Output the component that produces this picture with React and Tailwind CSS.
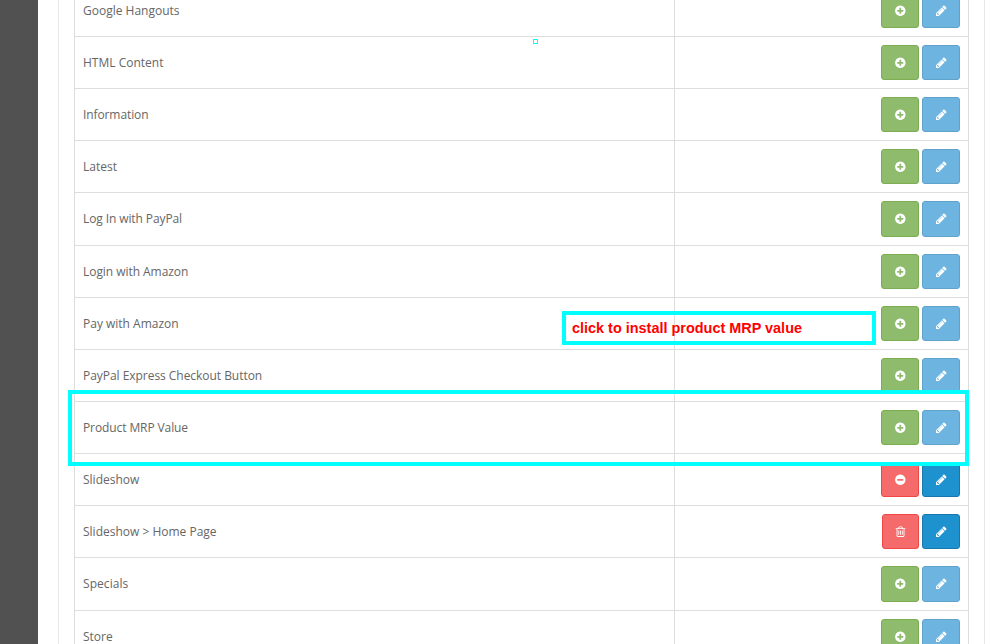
const CIRCLE =
  "M1536 768q0 209-103 385.5t-279.5 279.5-385.5 103-385.5-103-279.5-279.5-103-385.5 103-385.5 279.5-279.5 385.5-103 385.5 103 279.5 279.5 103 385.5z";

function PlusCircle() {
  return (
    <svg viewBox="-10 -80 1616 1616" className="h-[11px] w-[11px] fill-white">
      <path d={"M1216 832v-128q0-26-19-45t-45-19h-256v-256q0-26-19-45t-45-19h-128q-26 0-45 19t-19 45v256h-256q-26 0-45 19t-19 45v128q0 26 19 45t45 19h256v256q0 26 19 45t45 19h128q26 0 45-19t19-45v-256h256q26 0 45-19t19-45z" + CIRCLE} />
    </svg>
  );
}

function MinusCircle() {
  return (
    <svg viewBox="-10 -80 1616 1616" className="h-[11px] w-[11px] fill-white">
      <path d={"M1216 832v-128q0-26-19-45t-45-19h-768q-26 0-45 19t-19 45v128q0 26 19 45t45 19h768q26 0 45-19t19-45z" + CIRCLE} />
    </svg>
  );
}

function Pencil() {
  return (
    <svg viewBox="128 69 1595 1595" className="h-[11px] w-[11px] fill-white">
      <path d="M491 1536l91-91-235-235-91 91v107h128v128h107zm523-928q0-22-22-22-10 0-17 7l-542 542q-7 7-7 17 0 22 22 22 10 0 17-7l542-542q7-7 7-17zm-54-192l416 416-832 832h-416v-416zm683 96q0 53-37 90l-166 166-416-416 166-165q36-38 90-38 53 0 91 38l235 234q37 39 37 91z" />
    </svg>
  );
}

function Trash() {
  return (
    <svg viewBox="92 58 1606 1606" className="h-[11px] w-[11px] fill-white">
      <path d="M704 736v576q0 14-9 23t-23 9h-64q-14 0-23-9t-9-23v-576q0-14 9-23t23-9h64q14 0 23 9t9 23zm256 0v576q0 14-9 23t-23 9h-64q-14 0-23-9t-9-23v-576q0-14 9-23t23-9h64q14 0 23 9t9 23zm256 0v576q0 14-9 23t-23 9h-64q-14 0-23-9t-9-23v-576q0-14 9-23t23-9h64q14 0 23 9t9 23zm128 724v-948h-896v948q0 22 7 40.5t14.5 27 10.5 8.5h832q3 0 10.5-8.5t14.5-27 7-40.5zm-672-1076h448l-48-117q-7-9-17-11h-317q-10 2-17 11zm928 32v64q0 14-9 23t-23 9h-96v948q0 83-47 143.5t-113 60.5h-832q-66 0-113-58.5t-47-141.5v-952h-96q-14 0-23-9t-9-23v-64q0-14 9-23t23-9h309l70-167q15-37 54-63t79-26h320q40 0 79 26t54 63l70 167h309q14 0 23 9t9 23z" />
    </svg>
  );
}

const ROWS = [
  { name: "Google Hangouts" },
  { name: "HTML Content" },
  { name: "Information", tracking: "tracking-[-0.1px]" },
  { name: "Latest" },
  { name: "Log In with PayPal", tall: true, tracking: "tracking-[-0.1px]" },
  { name: "Login with Amazon", tracking: "tracking-[-0.05px]" },
  { name: "Pay with Amazon" },
  { name: "PayPal Express Checkout Button", tracking: "tracking-[-0.04px]" },
  { name: "Product MRP Value", tracking: "tracking-[-0.1px]" },
  { name: "Slideshow", action: "uninstall" },
  { name: "Slideshow > Home Page", action: "delete" },
  { name: "Specials", tall: true, tracking: "tracking-[0.06px]" },
  { name: "Store" },
];

const BUTTON = "flex items-start rounded-[3px] border pt-[11px]";

function Row({ name, tall, action, tracking = "tracking-normal" }) {
  return (
    <div className={`flex shrink-0 border-b border-[#ddd] ${tall ? "h-[53px]" : "h-[52px]"}`}>
      <div className={`w-[600px] border-r border-[#ddd] pt-[17px] pl-2 text-[12px] leading-[17px] ${tracking}`}>
        {name}
      </div>
      <div className="flex flex-1 justify-end gap-[3px] p-2">
        {!action && (
          <button className={`${BUTTON} w-[38px] border-[#7aae50] bg-[#8fbb6c] pl-[13px]`}>
            <PlusCircle />
          </button>
        )}
        {action === "uninstall" && (
          <button className={`${BUTTON} w-[38px] border-[#f24545] bg-[#f56b6b] pl-[13px]`}>
            <MinusCircle />
          </button>
        )}
        {action === "delete" && (
          <button className={`${BUTTON} w-[37px] border-[#f24545] bg-[#f56b6b] pl-3`}>
            <Trash />
          </button>
        )}
        <button
          className={`${BUTTON} w-[38px] pl-[13px] ${action ? "border-[#1978ab] bg-[#1e91cf]" : "border-[#5fa3cb] bg-[#6db5e0]"}`}
        >
          <Pencil />
        </button>
      </div>
    </div>
  );
}

export default function App() {
  return (
    <div className="relative flex h-[644px] w-[990px] overflow-hidden bg-white font-['Open_Sans',sans-serif] text-[#666]">
      <div className="w-[38px] shrink-0 bg-[#515151]" />
      <div className="ml-5 w-[927px] shrink-0 border-x border-[#e8e8e8] px-[15px]">
        <div className="-mt-[15px] flex flex-col border-x border-[#ddd]">
          {ROWS.map((row) => (
            <Row key={row.name} {...row} />
          ))}
        </div>
      </div>

      <div className="absolute top-[39px] left-[533px] h-[5px] w-[5px] border border-[#00ffff]" />
      <div className="absolute top-[311px] left-[562px] h-[34px] w-[314px] border-4 border-[#00ffff] pl-[6px] font-['Liberation_Sans',sans-serif] text-[14.45px] leading-[26px] font-bold whitespace-nowrap text-[#ff0000]">
        click to install product MRP value
      </div>
      <div className="absolute top-[390px] left-[68px] h-[76px] w-[901px] border-4 border-[#00ffff]" />
    </div>
  );
}
